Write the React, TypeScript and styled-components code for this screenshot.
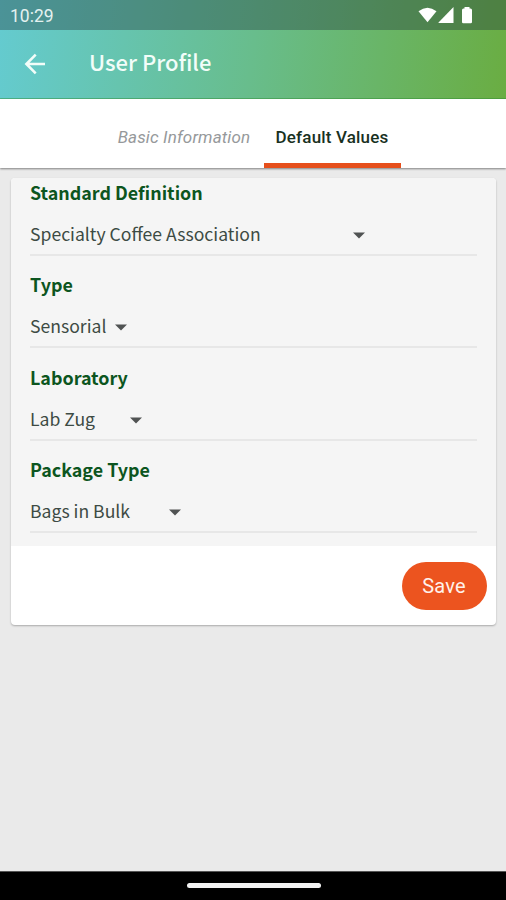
import React from "react";
import styled, { createGlobalStyle } from "styled-components";

const GlobalStyle = createGlobalStyle`
  * { box-sizing: border-box; }
  body { margin: 0; }
`;

const sourceSans = `"Noto Sans CJK SC", "Noto Sans", sans-serif`;

const Screen = styled.div`
  display: flex;
  flex-direction: column;
  width: 506px;
  height: 900px;
  overflow: hidden;
  background: #eaeaea;
  font-family: Roboto, sans-serif;
`;

const Header = styled.header`
  flex: none;
  height: 99px;
  background: linear-gradient(97deg, #64cbd0 0%, #68bd8c 50%, #6aad42 100%);
  border-bottom: 1px solid rgba(50, 150, 50, 0.45);
  color: #f2fdf9;
`;

const StatusBar = styled.div`
  display: flex;
  align-items: center;
  justify-content: space-between;
  height: 30px;
  padding: 1px 32px 0 10px;
  background: rgba(35, 55, 60, 0.38);
  color: #e4f1f0;
  font-size: 17.5px;
`;

const StatusIcons = styled.svg`
  display: block;
  width: 56px;
  height: 18px;
  margin-top: -2px;
`;

const TitleBar = styled.div`
  display: flex;
  align-items: center;
  height: 68px;
  padding-left: 24px;
`;

const BackIcon = styled.svg`
  width: 22px;
  height: 22px;
  margin-right: 43px;
`;

const Title = styled.h1`
  margin: 0 0 7px;
  font: 500 22px/30px ${sourceSans};
`;

const Tabs = styled.nav`
  flex: none;
  display: flex;
  justify-content: center;
  height: 69px;
  background: #fff;
  box-shadow: 0 1px 2px rgba(0, 0, 0, 0.45);
`;

const Tab = styled.button<{ $active?: boolean }>`
  flex: none;
  width: ${(p) => (p.$active ? 137 : 159)}px;
  padding: 12px 1px 0 0;
  border: 0;
  border-bottom: 5px solid ${(p) => (p.$active ? "#e64f1b" : "transparent")};
  background: none;
  color: ${(p) => (p.$active ? "#19311f" : "#96999b")};
  font: ${(p) => (p.$active ? "normal 500" : "italic 400")} 17px/22px Roboto, sans-serif;
  letter-spacing: ${(p) => (p.$active ? 0.17 : 0.14)}px;
  white-space: nowrap;
`;

const Content = styled.main`
  flex: 1;
  padding: 10px 10px 0 11px;
`;

const Card = styled.section`
  height: 447px;
  overflow: hidden;
  border-radius: 4px;
  background: #fff;
  box-shadow: 0 1px 2px rgba(0, 0, 0, 0.28);
`;

const Form = styled.div`
  height: 368px;
  padding: 0 19px;
  background: #f5f5f5;
`;

const Field = styled.div`
  height: 92.4px;
`;

const Label = styled.label`
  display: block;
  height: 30px;
  color: #0c5520;
  font: 700 17.9px/28px ${sourceSans};
`;

const Select = styled.div<{ $width: number }>`
  display: flex;
  align-items: center;
  justify-content: space-between;
  width: ${(p) => p.$width}px;
  height: 46px;
  padding-top: 6px;
  color: #3d4b44;
  font: 400 17.6px/30px ${sourceSans};
  white-space: nowrap;
`;

const Underline = styled.div`
  height: 2px;
  background: #e7e7e7;
`;

const Caret = styled.svg`
  flex: none;
  width: 12px;
  height: 7px;
  margin-top: 3px;
`;

const Actions = styled.footer`
  display: flex;
  justify-content: flex-end;
  padding: 16px 9px;
`;

const SaveButton = styled.button`
  width: 85px;
  height: 48px;
  padding: 0 1px 0 0;
  border: 0;
  border-radius: 24px;
  background: #ec541f;
  color: #fff1ea;
  font: 400 20px/24px Roboto, sans-serif;
  letter-spacing: 0.2px;
`;

const NavigationBar = styled.div`
  flex: none;
  display: flex;
  justify-content: center;
  height: 29px;
  padding-top: 11px;
  border-top: 1px solid #555;
  background: #000;
`;

const HomeHandle = styled.div`
  width: 134px;
  height: 5px;
  margin-left: 1px;
  border-radius: 3px;
  background: #f2f2f2;
`;

const fields = [
  { label: "Standard Definition", value: "Specialty Coffee Association", width: 335 },
  { label: "Type", value: "Sensorial", width: 97 },
  { label: "Laboratory", value: "Lab Zug", width: 112 },
  { label: "Package Type", value: "Bags in Bulk", width: 151 },
];

export default function App() {
  return (
    <Screen>
      <GlobalStyle />
      <Header>
        <StatusBar>
          <span>10:29</span>
          <StatusIcons viewBox="0 0 56 18" fill="#fff">
            <path d="M.5 5.2Q9.5-1.800 18.500 5.200L9.500 16.200Z" />
            <path d="M20.500 17V16.400L35.500 1V17Z" />
            <path d="M46.500 1H51.500V2.500H52.500Q54 2.500 54 4V16Q54 17.300 52.700 17.300H45.300Q44 17.300 44 16V4Q44 2.500 45.500 2.500H46.500Z" />
          </StatusIcons>
        </StatusBar>
        <TitleBar>
          <BackIcon viewBox="0 0 22 22" fill="none" stroke="currentColor" strokeWidth="2.6">
            <path d="M21 11H3M11.700 1.700L2.400 11L11.700 20.300" />
          </BackIcon>
          <Title>User Profile</Title>
        </TitleBar>
      </Header>
      <Tabs>
        <Tab>Basic Information</Tab>
        <Tab $active>Default Values</Tab>
      </Tabs>
      <Content>
        <Card>
          <Form>
            {fields.map(({ label, value, width }) => (
              <Field key={label}>
                <Label>{label}</Label>
                <Select $width={width}>
                  <span>{value}</span>
                  <Caret viewBox="0 0 12 7">
                    <path d="M0 .5H12L6 6.500Z" fill="#505353" />
                  </Caret>
                </Select>
                <Underline />
              </Field>
            ))}
          </Form>
          <Actions>
            <SaveButton>Save</SaveButton>
          </Actions>
        </Card>
      </Content>
      <NavigationBar>
        <HomeHandle />
      </NavigationBar>
    </Screen>
  );
}
